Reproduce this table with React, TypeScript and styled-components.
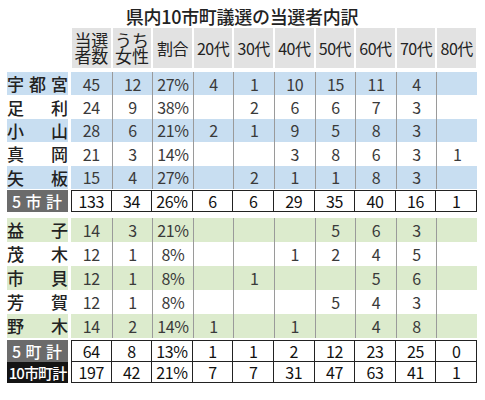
import styled, { createGlobalStyle, css } from "styled-components";

const GlobalStyle = createGlobalStyle`
  body {
    margin: 0;
    background: #fff;
    font-family: "Noto Sans CJK JP", "Noto Sans", sans-serif;
    color: #333;
  }
`;

type Tint = "blue" | "green" | "none";

const tints: Record<Tint, string> = {
  blue: "#c8def1",
  green: "#dcebcd",
  none: "transparent",
};

const Page = styled.div`
  width: 470px;
  padding-left: 7px;
`;

const Title = styled.h1`
  margin: 0;
  height: 24px;
  padding-top: 4px;
  font-size: 18px;
  line-height: 24px;
  font-weight: 500;
  color: #222;
  text-align: center;
  letter-spacing: -0.3px;
`;

const gridCols = css`
  display: grid;
  grid-template-columns: 64px repeat(10, 1fr);
`;

const HeaderRow = styled.div`
  ${gridCols};
  height: 40px;
  margin-bottom: 4px;
`;

const HeaderCell = styled.div`
  margin: 0 1px;
  background: #e2e2e2;
  display: flex;
  align-items: center;
  justify-content: center;
  text-align: center;
  font-size: 16px;
  line-height: 1;
  color: #222;
  letter-spacing: -0.5px;
  white-space: nowrap;
`;

const HeaderStack = styled.span`
  display: block;
  font-size: 17px;
  line-height: 16.5px;
  letter-spacing: -0.2px;
`;

const Row = styled.div<{ $h: number; $gap?: number }>`
  ${gridCols};
  height: ${({ $h }) => $h}px;
  margin-top: ${({ $gap }) => $gap ?? 0}px;
  line-height: 1;
`;

const Spacer = styled.div<{ $h: number }>`
  height: ${({ $h }) => $h}px;
`;

const NameCell = styled.div<{ $tint: Tint }>`
  margin-right: 3px;
  background: ${({ $tint }) => tints[$tint]};
  display: flex;
  align-items: center;
  justify-content: space-between;
  font-size: 17px;
  font-weight: 500;
  color: #222;
`;

const TotalName = styled.div<{ $dark?: boolean }>`
  margin-right: 3px;
  background: ${({ $dark }) => ($dark ? "#141414" : "#6b6b6b")};
  color: #fff;
  display: flex;
  align-items: center;
  justify-content: ${({ $dark }) => ($dark ? "center" : "space-between")};
  padding: 0 ${({ $dark }) => ($dark ? 0 : 6)}px 0 ${({ $dark }) => ($dark ? 0 : 5)}px;
  font-size: ${({ $dark }) => ($dark ? 15 : 16)}px;
  font-weight: 500;
  letter-spacing: ${({ $dark }) => ($dark ? -0.9 : 0)}px;
  white-space: nowrap;
  overflow: hidden;
`;

const DataCell = styled.div<{ $tint: Tint; $first: boolean }>`
  background: ${({ $tint }) => tints[$tint]};
  border-left: ${({ $first }) => ($first ? "none" : "1px solid #9a9a9a")};
  display: flex;
  align-items: center;
  justify-content: center;
  font-size: 16px;
  color: #3a3a3a;
  letter-spacing: -0.4px;
`;

const TotalCell = styled.div<{ $first: boolean; $stacked?: boolean }>`
  border: 1px solid #222;
  border-left-width: ${({ $first }) => ($first ? 1 : 0)}px;
  border-top-width: ${({ $stacked }) => ($stacked ? 0 : 1)}px;
  display: flex;
  align-items: center;
  justify-content: center;
  font-size: 16px;
  color: #111;
  letter-spacing: -0.4px;
`;

type Line = { name: string; values: string[] };

const cities: Line[] = [
  { name: "宇都宮", values: ["45", "12", "27%", "4", "1", "10", "15", "11", "4", ""] },
  { name: "足利", values: ["24", "9", "38%", "", "2", "6", "6", "7", "3", ""] },
  { name: "小山", values: ["28", "6", "21%", "2", "1", "9", "5", "8", "3", ""] },
  { name: "真岡", values: ["21", "3", "14%", "", "", "3", "8", "6", "3", "1"] },
  { name: "矢板", values: ["15", "4", "27%", "", "2", "1", "1", "8", "3", ""] },
];

const towns: Line[] = [
  { name: "益子", values: ["14", "3", "21%", "", "", "", "5", "6", "3", ""] },
  { name: "茂木", values: ["12", "1", "8%", "", "", "1", "2", "4", "5", ""] },
  { name: "市貝", values: ["12", "1", "8%", "", "1", "", "", "5", "6", ""] },
  { name: "芳賀", values: ["12", "1", "8%", "", "", "", "5", "4", "3", ""] },
  { name: "野木", values: ["14", "2", "14%", "1", "", "1", "", "4", "8", ""] },
];

const cityTotal = ["133", "34", "26%", "6", "6", "29", "35", "40", "16", "1"];
const townTotal = ["64", "8", "13%", "1", "1", "2", "12", "23", "25", "0"];
const allTotal = ["197", "42", "21%", "7", "7", "31", "47", "63", "41", "1"];

const ages = ["20代", "30代", "40代", "50代", "60代", "70代", "80代"];

function DataRow({ line, tint, h }: { line: Line; tint: Tint; h: number }) {
  return (
    <Row $h={h}>
      <NameCell $tint={tint}>
        {line.name.split("").map((c, i) => (
          <span key={i}>{c}</span>
        ))}
      </NameCell>
      {line.values.map((v, i) => (
        <DataCell key={i} $tint={tint} $first={i === 0}>
          {v}
        </DataCell>
      ))}
    </Row>
  );
}

function TotalRow({
  label,
  values,
  dark,
  gap,
  stacked,
}: {
  label: string[];
  values: string[];
  dark?: boolean;
  gap?: number;
  stacked?: boolean;
}) {
  return (
    <Row $h={stacked ? 21 : 22} $gap={gap}>
      <TotalName $dark={dark}>
        {label.map((c, i) => (
          <span key={i}>{c}</span>
        ))}
      </TotalName>
      {values.map((v, i) => (
        <TotalCell key={i} $first={i === 0} $stacked={stacked}>
          {v}
        </TotalCell>
      ))}
    </Row>
  );
}

export default function App() {
  return (
    <>
      <GlobalStyle />
      <Page>
        <Title>県内10市町議選の当選者内訳</Title>
        <HeaderRow>
          <div />
          <HeaderCell>
            <HeaderStack>
              当選
              <br />
              者数
            </HeaderStack>
          </HeaderCell>
          <HeaderCell>
            <HeaderStack>
              うち
              <br />
              女性
            </HeaderStack>
          </HeaderCell>
          <HeaderCell>割合</HeaderCell>
          {ages.map((a) => (
            <HeaderCell key={a}>{a}</HeaderCell>
          ))}
        </HeaderRow>
        {cities.map((c, i) => (
          <DataRow key={c.name} line={c} tint={i % 2 === 0 ? "blue" : "none"} h={23.4} />
        ))}
        <TotalRow label={["5", "市", "計"]} values={cityTotal} gap={1} />
        <Spacer $h={6} />
        {towns.map((c, i) => (
          <DataRow key={c.name} line={c} tint={i % 2 === 0 ? "green" : "none"} h={24} />
        ))}
        <TotalRow label={["5", "町", "計"]} values={townTotal} gap={2} />
        <TotalRow label={["10市町計"]} values={allTotal} dark stacked />
      </Page>
    </>
  );
}
